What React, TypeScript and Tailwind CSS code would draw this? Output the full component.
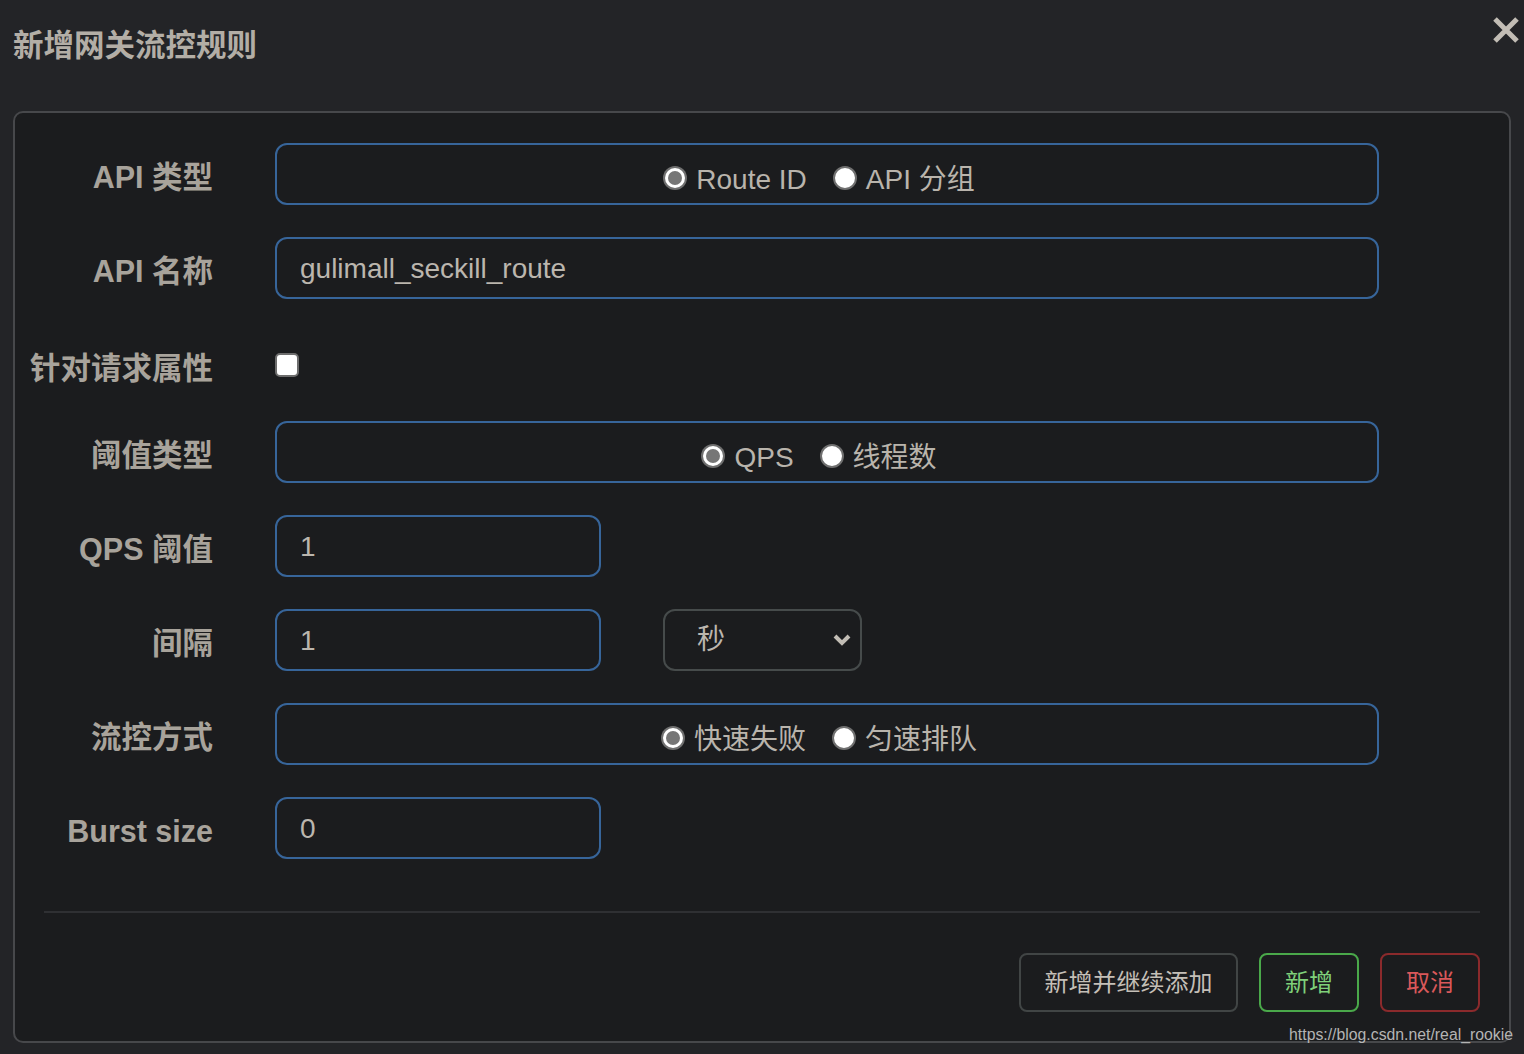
import React from "react";

function Radio({ checked }: { checked?: boolean }) {
  return checked ? (
    <span className="w-[24px] h-[24px] rounded-full bg-[#6f6f6f] flex items-center justify-center shrink-0">
      <span className="w-[20px] h-[20px] rounded-full bg-white flex items-center justify-center">
        <span className="w-[14px] h-[14px] rounded-full bg-[#767676]" />
      </span>
    </span>
  ) : (
    <span className="block w-[24px] h-[24px] rounded-full bg-white border-2 border-[#6f6f6f] shrink-0" />
  );
}

function RadioGroup({ items }: { items: string[] }) {
  return (
    <div className="w-[1104px] h-[62px] border-2 border-[#37659a] rounded-[12px] flex items-center justify-center pr-[16px] pt-[12px]">
      <div className="flex items-center gap-[26px]">
        {items.map((t, i) => (
          <div key={t} className="flex items-center gap-[9px]">
            <span className="flex -mt-[5px] shrink-0">
              <Radio checked={i === 0} />
            </span>
            <span className="text-[28px] leading-[32px] text-[#b9b4ac]">{t}</span>
          </div>
        ))}
      </div>
    </div>
  );
}

function TextBox({ value, wide }: { value: string; wide?: boolean }) {
  return (
    <div
      className={
        (wide ? "w-[1104px] " : "w-[326px] ") +
        "h-[62px] border-2 border-[#37659a] rounded-[12px] flex items-center pl-[23px] pt-[2px] text-[28px] text-[#bbb6ae]"
      }
    >
      {value}
    </div>
  );
}

function Label({ children }: { children: React.ReactNode }) {
  return (
    <div className="w-[198px] text-right text-[30.5px] leading-[36px] pt-[6px] font-bold text-[#a8a39b] shrink-0 whitespace-nowrap">
      {children}
    </div>
  );
}

export default function App() {
  return (
    <div className="w-[1524px] h-[1054px] bg-[#232427] overflow-hidden relative font-['Liberation_Sans','Noto_Sans_CJK_SC',sans-serif]">
      <div className="h-[111px] flex justify-between items-start">
        <div className="ml-[13px] mt-[28px] text-[30.5px] leading-[34px] font-bold text-[#b3aea6]">
          新增网关流控规则
        </div>
        <svg width="28" height="28" viewBox="0 0 28 28" className="mt-[16px] mr-[4px]">
          <path d="M3 3 L25 25 M25 3 L3 25" stroke="#c2bdb5" strokeWidth="5" strokeLinecap="butt" />
        </svg>
      </div>
      <div className="mx-[13px] h-[932px] border-2 border-[#47484b] rounded-[10px] bg-[#1b1c1e] pt-[30px]">
        <div className="flex flex-col gap-[32px]">
          <div className="flex items-center h-[62px]">
            <Label>API 类型</Label>
            <div className="ml-[62px]">
              <RadioGroup items={["Route ID", "API 分组"]} />
            </div>
          </div>
          <div className="flex items-center h-[62px]">
            <Label>API 名称</Label>
            <div className="ml-[62px]">
              <TextBox value="gulimall_seckill_route" wide />
            </div>
          </div>
          <div className="flex items-center h-[58px] pt-[10px]">
            <Label>针对请求属性</Label>
            <div className="ml-[62px] w-[24px] h-[24px] bg-white border-2 border-[#6d6d6d] rounded-[5px]" />
          </div>
          <div className="flex items-center h-[62px]">
            <Label>阈值类型</Label>
            <div className="ml-[62px]">
              <RadioGroup items={["QPS", "线程数"]} />
            </div>
          </div>
          <div className="flex items-center h-[62px]">
            <Label>QPS 阈值</Label>
            <div className="ml-[62px]">
              <TextBox value="1" />
            </div>
          </div>
          <div className="flex items-center h-[62px]">
            <Label>间隔</Label>
            <div className="ml-[62px]">
              <TextBox value="1" />
            </div>
            <div className="ml-[62px] w-[199px] h-[62px] border-2 border-[#464b4b] rounded-[12px] flex items-center justify-between pl-[32px] pr-[8px]">
              <span className="text-[28px] text-[#bbb6ae]">秒</span>
              <svg width="20" height="14" viewBox="0 0 20 14">
                <path d="M3 3 L10 10 L17 3" stroke="#c2bdb5" strokeWidth="4" fill="none" />
              </svg>
            </div>
          </div>
          <div className="flex items-center h-[62px]">
            <Label>流控方式</Label>
            <div className="ml-[62px]">
              <RadioGroup items={["快速失败", "匀速排队"]} />
            </div>
          </div>
          <div className="flex items-center h-[62px]">
            <Label>Burst size</Label>
            <div className="ml-[62px]">
              <TextBox value="0" />
            </div>
          </div>
        </div>
        <div className="mt-[52px] mx-[29px] h-[2px] bg-[#2f3033]" />
        <div className="mt-[40px] mr-[29px] flex justify-end gap-[21px]">
          <div className="w-[219px] h-[59px] border-2 border-[#414545] rounded-[8px] flex items-center justify-center text-[24px] text-[#c4bfb7]">
            新增并继续添加
          </div>
          <div className="w-[100px] h-[59px] border-2 border-[#4aa84a] rounded-[8px] flex items-center justify-center text-[24px] text-[#7fd07a]">
            新增
          </div>
          <div className="w-[100px] h-[59px] border-2 border-[#8b2a2c] rounded-[8px] flex items-center justify-center text-[24px] text-[#d9585a]">
            取消
          </div>
        </div>
      </div>
      <div className="absolute right-[11px] top-[1025px] text-[15.8px] leading-[20px] text-[#b4b4b4]">
        https://blog.csdn.net/real_rookie
      </div>
    </div>
  );
}
